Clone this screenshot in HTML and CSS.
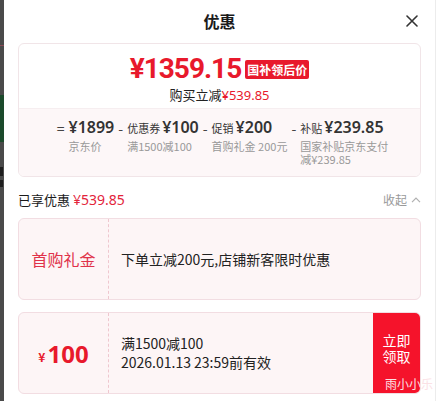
FILE: index.html
```html
<!DOCTYPE html>
<html lang="zh-CN">
<head>
<meta charset="utf-8">
<title>优惠</title>
<link rel="stylesheet" href="styles.css">
</head>
<body>
<div class="page">
  <div class="backdrop">
    <span class="bd-line"></span>
    <span class="bd-green"></span>
    <span class="bd-mark"></span>
    <span class="bd-mark2"></span>
  </div>
  <div class="modal">
    <div class="header">
      <h1 class="title">优惠</h1>
      <svg class="close" width="12" height="12" viewBox="0 0 12 12"><path d="M1 1L11 11M11 1L1 11" stroke="#333" stroke-width="1.6" stroke-linecap="round" fill="none"/></svg>
    </div>

    <div class="price-card">
      <div class="price-top">
        <div class="price-line">
          <span class="price">¥1359.15</span>
          <span class="badge">国补领后价</span>
        </div>
        <div class="save">购买立减<span class="red">¥539.85</span></div>
      </div>
      <div class="breakdown">
        <span class="op">=</span>
        <div class="col">
          <div class="top"><span class="amt">¥1899</span></div>
          <div class="sub">京东价</div>
        </div>
        <span class="op">-</span>
        <div class="col">
          <div class="top"><span class="lbl">优惠券</span><span class="amt">¥100</span></div>
          <div class="sub">满1500减100</div>
        </div>
        <span class="op">-</span>
        <div class="col">
          <div class="top"><span class="lbl">促销</span><span class="amt">¥200</span></div>
          <div class="sub">首购礼金 200元</div>
        </div>
        <span class="op">-</span>
        <div class="col">
          <div class="top"><span class="lbl">补贴</span><span class="amt">¥239.85</span></div>
          <div class="sub">国家补贴京东支付减¥239.85</div>
        </div>
      </div>
    </div>

    <div class="enjoy">
      <div class="enjoy-left">已享优惠 <span class="enjoy-amt">¥539.85</span></div>
      <div class="fold">收起<svg width="10" height="6" viewBox="0 0 10 6"><path d="M1 5.2L5 1.2L9 5.2" stroke="#b0b0b0" stroke-width="1.2" fill="none"/></svg></div>
    </div>

    <div class="coupon">
      <div class="c-left"><span class="c-name">首购礼金</span></div>
      <div class="c-body"><div class="c-line">下单立减200元,店铺新客限时优惠</div></div>
    </div>

    <div class="coupon coupon-2">
      <div class="c-left"><span class="c-yen">¥</span><span class="c-val">100</span></div>
      <div class="c-body">
        <div class="c-line">满1500减100</div>
        <div class="c-line">2026.01.13 23:59前有效</div>
      </div>
      <div class="c-btn"><span class="btn-line">立即</span><span class="btn-line">领取</span></div>
    </div>
  </div>
  <div class="watermark">雨小小乐</div>
</div>
</body>
</html>
```

FILE: styles.css
```css
* { box-sizing: border-box; margin: 0; padding: 0; }
html, body { width: 440px; height: 401px; overflow: hidden; }
body {
  font-family: "Noto Sans CJK SC", "Noto Sans", sans-serif;
  background: #fff;
  color: #1a1a1a;
}
.page { display: flex; height: 401px; position: relative; overflow: hidden; }

.backdrop {
  width: 4px;
  flex: none;
  background: #4a4a4a;
  display: flex;
  flex-direction: column;
}
.bd-line { height: 1px; background: #8c4a56; margin-top: 45px; }
.bd-green { height: 47px; background: #1b4a2b; margin-top: 49px; }
.bd-mark { height: 9px; width: 3px; background: #1e1e1e; margin-top: 25px; }
.bd-mark2 { height: 7px; width: 3px; background: #1e1e1e; margin-top: 4px; }

.modal {
  width: 432px;
  flex: none;
  padding: 0 14px;
  border-right: 1px solid #ececec;
  background: #fff;
}

.header {
  height: 43px;
  display: grid;
  grid-template-columns: 1fr auto 1fr;
  align-items: center;
}
.title {
  grid-column: 2;
  font-size: 16px;
  font-weight: 700;
  color: #1a1a1a;
  line-height: 22px;
  margin-top: -2px;
}
.close { grid-column: 3; justify-self: end; margin-right: 3px; margin-top: -1px; }

.price-card {
  border: 1px solid #f1e5e8;
  border-radius: 6px;
  overflow: hidden;
}
.price-top {
  padding: 6px 0 4px;
  display: flex;
  flex-direction: column;
  align-items: center;
}
.price-line { display: flex; align-items: center; gap: 4px; height: 36px; }
.price {
  font-family: Roboto, "Noto Sans", sans-serif;
  font-weight: 700;
  font-size: 28px;
  color: #e8192c;
  letter-spacing: -1px;
}
.badge {
  background: #e8192c;
  color: #fff;
  font-size: 12px;
  font-weight: 700;
  line-height: 19px;
  padding: 0 2px;
  border-radius: 2px;
  margin-top: 2px;
}
.save { font-size: 13px; line-height: 18px; color: #222; }
.save .red { color: #e8192c; font-family: "Noto Sans", sans-serif; }

.breakdown {
  background: #fdf7f8;
  border-top: 1px solid #f6eef0;
  padding: 8px 0 10px 6px;
  display: flex;
  justify-content: center;
  align-items: flex-start;
  gap: 4px;
}
.op { font-size: 14px; line-height: 22px; color: #444; }
.col { display: flex; flex-direction: column; gap: 1px; }
.top { display: flex; align-items: baseline; gap: 2px; height: 22px; line-height: 22px; white-space: nowrap; }
.lbl { font-size: 11px; color: #333; }
.amt {
  font-family: "Noto Sans", sans-serif;
  font-weight: 600;
  font-size: 16px;
  line-height: 20px;
  color: #333;
}
.sub { font-size: 11px; line-height: 13px; color: #999; max-width: 88px; }

.enjoy {
  display: flex;
  justify-content: space-between;
  align-items: center;
  padding: 13px 0 8px;
  line-height: 20px;
}
.enjoy-left { font-size: 13px; color: #1a1a1a; }
.enjoy-amt { color: #e3243b; font-family: "Noto Sans", sans-serif; font-size: 14px; }
.fold { font-size: 12px; color: #9a9a9a; display: flex; align-items: center; gap: 4px; }

.coupon {
  height: 82px;
  border: 1px solid #f2dde2;
  border-radius: 6px;
  background: #fdf5f6;
  display: flex;
  overflow: hidden;
}
.coupon-2 { margin-top: 12px; }
.c-left {
  width: 90px;
  flex: none;
  border-right: 1px dashed #efc7cf;
  display: flex;
  align-items: center;
  justify-content: center;
}
.c-name { font-size: 16px; color: #e0324a; }
.c-yen { font-size: 12px; color: #e8192c; font-weight: 700; margin-right: 2px; margin-top: 6px; }
.c-val {
  font-family: "Noto Sans", sans-serif;
  font-weight: 700;
  font-size: 24px;
  color: #e8192c;
}
.c-body {
  flex: 1;
  padding-left: 12px;
  display: flex;
  flex-direction: column;
  justify-content: center;
}
.c-line { font-size: 14px; line-height: 19px; color: #222; }
.c-btn {
  width: 47px;
  flex: none;
  background: #f5132b;
  color: #fff;
  display: flex;
  flex-direction: column;
  align-items: center;
  justify-content: center;
  padding-bottom: 10px;
  gap: 1px;
}
.btn-line { font-size: 14px; line-height: 15px; }

.watermark {
  position: absolute;
  left: 385px;
  top: 376px;
  font-size: 12px;
  line-height: 16px;
  color: #fbe1e5;
  white-space: nowrap;
}
```
